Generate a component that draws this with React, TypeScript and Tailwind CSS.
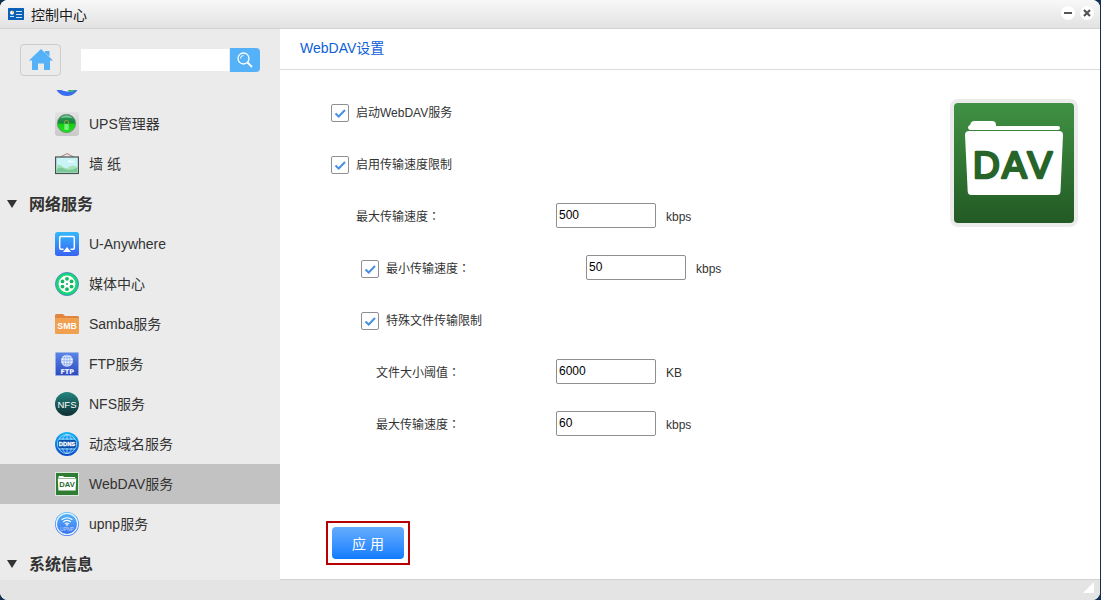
import React, { useState } from 'react';

type IconProps = { className?: string };

const ICON = 'block h-6 w-6 shrink-0';

function GlobeSliver() {
  return (
    <svg viewBox="0 0 24 24" className={ICON} aria-hidden="true">
      <circle cx="12" cy="12" r="12" fill="#3b6df0" />
      <path d="M4.500 17h10.500v2.200q-6 1-10.500-2.200z" fill="#f2f6ff" />
      <path d="M13 17h7.500l-2 2.500q-3 1.500-5.500-.8z" fill="#3fb26b" />
    </svg>
  );
}

function UpsIcon() {
  return (
    <svg viewBox="0 0 24 24" className={ICON} aria-hidden="true">
      <defs>
        <linearGradient id="upsPlate" x1="0" y1="0" x2="0" y2="1">
          <stop offset="0" stopColor="#e2e2e2" />
          <stop offset="1" stopColor="#c9c9c9" />
        </linearGradient>
        <linearGradient id="upsBall" x1="0" y1="0" x2="0" y2="1">
          <stop offset="0" stopColor="#2f9b5c" />
          <stop offset="0.48" stopColor="#16853a" />
          <stop offset="0.52" stopColor="#12cf12" />
          <stop offset="1" stopColor="#1fe01f" />
        </linearGradient>
      </defs>
      <rect width="24" height="24" rx="3" fill="url(#upsPlate)" />
      <circle cx="11.500" cy="11.500" r="9.200" fill="url(#upsBall)" stroke="#6b8f77" strokeWidth="0.8" />
      <path d="M5 6.500Q11.500 0 18 6.500Q11.500 4.500 5 6.500z" fill="#8fd0ac" opacity="0.8" />
      <path d="M9.500 12v-2q0-1.500 2-1.500t2 1.500V12" fill="none" stroke="#8c9a3c" strokeWidth="1.100" />
      <rect x="9.300" y="12" width="4.400" height="6" rx="0.800" fill="#7aee7a" />
    </svg>
  );
}

function WallpaperIcon() {
  return (
    <svg viewBox="0 0 24 24" className={ICON} aria-hidden="true">
      <path d="M5.500 5 12 1.500 18.500 5" fill="none" stroke="#b08a8a" strokeWidth="1.100" />
      <rect x="0.600" y="5" width="22.800" height="16.500" fill="#c9f4f6" stroke="#4a4f52" strokeWidth="1.200" />
      <path d="M1.500 14q3-3 6.500 1 3 2 6 0 4-3 8.500 0v5.500h-21z" fill="#a5e3bb" />
      <path d="M1.500 17.500q4-4 9 0 6 1.500 12-2v5h-21z" fill="#7cc795" />
      <path d="M13 9q2-2 3 0h3v1.200h-6z" fill="#f3ffff" />
    </svg>
  );
}

function AnywhereIcon() {
  return (
    <svg viewBox="0 0 24 24" className={ICON} aria-hidden="true">
      <defs>
        <linearGradient id="anywhere" x1="0" y1="0" x2="0" y2="1">
          <stop offset="0" stopColor="#35b8fb" />
          <stop offset="1" stopColor="#3763f2" />
        </linearGradient>
      </defs>
      <rect width="24" height="24" rx="2.500" fill="url(#anywhere)" />
      <path d="M8 17.200H6q-1.300 0-1.300-1.300V5.700q0-1.300 1.300-1.300h12q1.300 0 1.300 1.300v10.200q0 1.300-1.300 1.300h-2" fill="none" stroke="#fff" strokeWidth="1.500" strokeLinecap="round" />
      <path d="M12 15 16 20H8z" fill="#fff" />
    </svg>
  );
}

function MediaIcon() {
  return (
    <svg viewBox="0 0 24 24" className={ICON} aria-hidden="true">
      <circle cx="12" cy="12" r="11.500" fill="#18d873" stroke="#4b83c9" strokeWidth="0.900" />
      <circle cx="12" cy="12" r="8.400" fill="#fff" />
      <g fill="#17b665">
        <circle cx="12" cy="6.800" r="1.900" />
        <circle cx="16.500" cy="9.400" r="1.900" />
        <circle cx="16.500" cy="14.600" r="1.900" />
        <circle cx="12" cy="17.200" r="1.900" />
        <circle cx="7.500" cy="14.600" r="1.900" />
        <circle cx="7.500" cy="9.400" r="1.900" />
        <circle cx="12" cy="12" r="1" />
      </g>
    </svg>
  );
}

function SambaIcon() {
  return (
    <svg viewBox="0 0 24 24" className={ICON} aria-hidden="true">
      <path d="M0 3.500Q0 2 1.500 2H8l2 2h12.500Q24 4 24 5.500V9H0z" fill="#e0843f" />
      <rect y="6" width="24" height="16" rx="1" fill="#f0a04f" />
      <text x="12" y="16.800" textAnchor="middle" fontFamily="Liberation Sans, sans-serif" fontWeight="700" fontSize="8.700" fill="#fff">SMB</text>
    </svg>
  );
}

function FtpIcon() {
  return (
    <svg viewBox="0 0 24 24" className={ICON} aria-hidden="true">
      <defs>
        <linearGradient id="ftp" x1="0" y1="0" x2="0" y2="1">
          <stop offset="0" stopColor="#5a86e6" />
          <stop offset="1" stopColor="#2e4cc0" />
        </linearGradient>
      </defs>
      <rect x="0.500" y="0.500" width="23" height="23" rx="0.500" fill="url(#ftp)" stroke="#9db1e6" strokeWidth="0.600" />
      <circle cx="12" cy="8.800" r="6" fill="#eff5ff" />
      <g fill="none" stroke="#7c9fe8" strokeWidth="0.700">
        <path d="M12 2.800v12M6 8.800h12M7 5.800h10M7 11.800h10" />
        <ellipse cx="12" cy="8.800" rx="3" ry="6" />
      </g>
      <text x="12.200" y="22" textAnchor="middle" fontFamily="DejaVu Sans, sans-serif" fontWeight="700" fontSize="6.500" fill="#fff">FTP</text>
    </svg>
  );
}

function NfsIcon() {
  return (
    <svg viewBox="0 0 24 24" className={ICON} aria-hidden="true">
      <defs>
        <linearGradient id="nfs" x1="0" y1="0" x2="0" y2="1">
          <stop offset="0" stopColor="#22857f" />
          <stop offset="1" stopColor="#0f2f33" />
        </linearGradient>
      </defs>
      <circle cx="12" cy="12" r="12" fill="url(#nfs)" />
      <text x="12" y="15.500" textAnchor="middle" fontFamily="Liberation Sans, sans-serif" fontSize="9.500" fill="#fff">NFS</text>
    </svg>
  );
}

function DdnsIcon() {
  return (
    <svg viewBox="0 0 24 24" className={ICON} aria-hidden="true">
      <defs>
        <linearGradient id="ddns" x1="0" y1="0" x2="0" y2="1">
          <stop offset="0" stopColor="#16b4f6" />
          <stop offset="1" stopColor="#0c49c9" />
        </linearGradient>
      </defs>
      <circle cx="12" cy="12" r="12" fill="url(#ddns)" />
      <g fill="none" stroke="#a9e2ff" strokeWidth="0.800">
        <circle cx="12" cy="12" r="9.500" />
        <ellipse cx="12" cy="12" rx="5" ry="9.500" />
        <path d="M12 2.500v19M4 7h16M4 17h16" />
      </g>
      <rect x="3" y="8" width="18" height="8" rx="2" fill="#0a50a8" />
      <text x="12" y="14.200" textAnchor="middle" fontFamily="Liberation Sans, sans-serif" fontWeight="700" fontSize="5.800" fill="#fff" stroke="#fff" strokeWidth="0.300">DDNS</text>
    </svg>
  );
}

function DavSmallIcon() {
  return (
    <svg viewBox="0 0 24 24" className={ICON} aria-hidden="true">
      <rect width="24" height="24" rx="0.500" fill="#dfe8df" />
      <rect x="1" y="1" width="22" height="22" fill="#2f7d32" />
      <path d="M3.500 6V5Q3.500 4 4.500 4H8l1 1h11v1z" fill="#fff" />
      <path d="M2.800 6.500h18.400l-.6 12H3.400z" fill="#fff" />
      <text x="12" y="15.300" textAnchor="middle" fontFamily="Liberation Sans, sans-serif" fontWeight="700" fontSize="7.600" fill="#2a6a2c">DAV</text>
    </svg>
  );
}

function UpnpIcon() {
  return (
    <svg viewBox="0 0 24 24" className={ICON} aria-hidden="true">
      <defs>
        <linearGradient id="upnp" x1="0" y1="0" x2="0" y2="1">
          <stop offset="0" stopColor="#55b9f9" />
          <stop offset="1" stopColor="#3a6df2" />
        </linearGradient>
      </defs>
      <circle cx="12" cy="12" r="12" fill="url(#upnp)" />
      <circle cx="12" cy="12" r="10.600" fill="none" stroke="#eaf5ff" strokeWidth="1.200" />
      <g fill="none" stroke="#fff" strokeLinecap="round" strokeWidth="1.100">
        <path d="M7 7.500q5-3.600 10 0" />
        <path d="M8.500 9.700q3.500-2.600 7 0" />
        <path d="M10.200 11.600q1.800-1.300 3.600 0" />
      </g>
      <circle cx="12" cy="13" r="0.900" fill="#fff" />
      <text x="12" y="18.700" textAnchor="middle" fontFamily="Liberation Sans, sans-serif" fontSize="5" fill="#c5dcff">UPNP</text>
    </svg>
  );
}

function DavLogo({ className }: IconProps) {
  return (
    <svg viewBox="0 0 128 128" className={className} role="img" aria-label="WebDAV">
      <defs>
        <linearGradient id="davLogo" x1="0" y1="0" x2="0" y2="1">
          <stop offset="0" stopColor="#409143" />
          <stop offset="1" stopColor="#225a24" />
        </linearGradient>
      </defs>
      <rect width="128" height="128" rx="8" fill="#ebebeb" />
      <rect x="4" y="4" width="120" height="120" rx="4" fill="url(#davLogo)" />
      <path d="M20 31q-2-.5-2-2.500t2-2.500l1-2.500Q22 22 24 22h18q4 0 4 4v1h62q2 0 2 2t-2 2z" fill="#fff" />
      <path d="M19 32h90q4 0 4 4l-2.500 56.500q-.2 3.500-4 3.500h-85q-3.600 0-3.800-3.500L15 36q0-4 4-4z" fill="#fff" />
      <text x="23 52 77.500" y="79" fontFamily="Liberation Sans, sans-serif" fontSize="37" fill="#27642a" stroke="#27642a" strokeWidth="2.600" strokeLinejoin="round">DAV</text>
    </svg>
  );
}

function Group({ title, children }: { title: string; children?: React.ReactNode }) {
  return (
    <li>
      <h2>
        <button type="button" className="flex h-10 w-full items-center gap-3 pl-[7px] text-left text-base font-bold text-[#333]">
          <svg viewBox="0 0 10 8" className="h-2 w-[10px]" aria-hidden="true">
            <path d="M0 0h10L5 8z" fill="#333" />
          </svg>
          <span className="pt-[2px]">{title}</span>
        </button>
      </h2>
      {children && <ul>{children}</ul>}
    </li>
  );
}

function Item({ icon, label, active }: { icon: React.ReactNode; label?: string; active?: boolean }) {
  return (
    <li>
      <a
        href="#"
        aria-current={active ? 'page' : undefined}
        className={
          active
            ? 'flex h-10 items-center gap-[10px] bg-[#c2c2c2] pl-[55px] text-sm text-[#333]'
            : 'flex h-10 items-center gap-[10px] pl-[55px] text-sm text-[#333]'
        }
      >
        {icon}
        {label}
      </a>
    </li>
  );
}

function Colon() {
  return <span className="font-['Noto_Sans_CJK_TC',sans-serif] leading-none" lang="zh-TW">：</span>;
}

function Check({ id, label, colon }: { id: string; label: string; colon?: boolean }) {
  const [on, setOn] = useState(true);
  return (
    <div className="flex items-center gap-[7px]">
      <span className="grid h-[18px] w-[18px] shrink-0">
        <input
          id={id}
          type="checkbox"
          checked={on}
          onChange={(e) => setOn(e.target.checked)}
          className="col-start-1 row-start-1 h-[18px] w-[18px] appearance-none rounded-xs border border-[#8f8f8f] bg-white"
        />
        {on && (
          <svg viewBox="0 0 18 18" className="pointer-events-none col-start-1 row-start-1 h-[18px] w-[18px]" aria-hidden="true">
            <path d="M4.500 9.500 7.700 12.500 14 6" fill="none" stroke="#4a90e2" strokeWidth="2" />
          </svg>
        )}
      </span>
      <label htmlFor={id}>{label}{colon && <Colon />}</label>
    </div>
  );
}

function Field({ id, value, unit, label }: { id: string; value: string; unit: string; label?: string }) {
  return (
    <div className="flex items-center gap-[10px] pb-1">
      <input
        id={id}
        aria-label={label}
        defaultValue={value}
        className="h-[25px] w-[100px] rounded-xs border border-[#8f8f8f] bg-white px-[2px] text-xs text-black"
      />
      <span className="pt-1">{unit}</span>
    </div>
  );
}

const ROW = 'flex h-[52px] items-center';

export default function App() {
  return (
    <div className="h-screen bg-[#12304f] pr-px font-['Liberation_Sans','Noto_Sans_CJK_SC',sans-serif]">
      <div className="flex h-full flex-col overflow-hidden rounded-lg bg-white">
        <header className="flex h-[29px] shrink-0 items-center gap-[7px] border-b border-[#d2d2d2] bg-linear-to-b from-[#f8f8f8] to-[#e2e2e2] pr-[6px] pl-2">
          <svg viewBox="0 0 16 12" className="h-3 w-4" aria-hidden="true">
            <rect width="16" height="12" rx="0.500" fill="#0962b8" />
            <circle cx="4" cy="4.800" r="2" fill="#fff" />
            <path d="M4 2.800a2 2 0 0 1 2 2H4z" fill="#f5c242" />
            <path d="M8 3.500h6M8 6.500h6M8 9.500h6M2 8.500h4" stroke="#cfe3f7" strokeWidth="1" />
          </svg>
          <h1 className="flex-1 pt-[2px] text-sm text-[#1a1a1a]">控制中心</h1>
          <div className="flex gap-[5px] pb-[2px]">
            <button type="button" aria-label="最小化" className="grid h-[14px] w-[14px] place-items-center rounded-full bg-white">
              <svg viewBox="0 0 14 14" className="h-[14px] w-[14px]"><path d="M3 7h8" stroke="#555" strokeWidth="2" /></svg>
            </button>
            <button type="button" aria-label="关闭" className="grid h-[14px] w-[14px] place-items-center rounded-full bg-white">
              <svg viewBox="0 0 14 14" className="h-[14px] w-[14px]"><path d="m4 4 6 6M10 4l-6 6" stroke="#555" strokeWidth="2.200" /></svg>
            </button>
          </div>
        </header>

        <div className="flex min-h-0 flex-1">
          <aside className="flex w-[280px] shrink-0 flex-col bg-[#ebebeb]">
            <div className="flex h-[61px] shrink-0 items-center px-5">
              <button type="button" aria-label="主页" className="mr-5 grid h-8 w-[41px] shrink-0 place-items-center rounded border border-[#cccccc]">
                <svg viewBox="0 0 24 22" className="h-[22px] w-6" aria-hidden="true">
                  <path d="M12 0 24 11.500h-3V21h-6v-6.500H9V21H3v-9.500H0zM16 2h4.500v5.500L16 3.500z" fill="#55b1f8" />
                </svg>
              </button>
              <form className="flex min-w-0 flex-1 items-center" onSubmit={(e) => e.preventDefault()}>
                <input type="search" aria-label="搜索" className="mr-px h-[22px] min-w-0 flex-1 bg-white px-1 text-xs" />
                <button type="submit" aria-label="搜索" className="grid h-6 w-[30px] shrink-0 place-items-center rounded-r bg-[#55b1f8]">
                  <svg viewBox="0 0 16 16" className="h-4 w-4" aria-hidden="true">
                    <circle cx="6.500" cy="6.500" r="5.500" fill="none" stroke="#fff" strokeWidth="1.300" />
                    <path d="M3.500 6.500a3 3 0 0 1 3-3" fill="none" stroke="#fff" strokeWidth="1" />
                    <path d="m10.500 10.500 4.500 4.500" stroke="#fff" strokeWidth="1.800" />
                  </svg>
                </button>
              </form>
            </div>
            <nav className="min-h-0 flex-1 overflow-hidden">
              <ul className="-mt-[26px]">
                <Item icon={<GlobeSliver />} />
                <Item icon={<UpsIcon />} label="UPS管理器" />
                <Item icon={<WallpaperIcon />} label="墙 纸" />
                <Group title="网络服务">
                  <Item icon={<AnywhereIcon />} label="U-Anywhere" />
                  <Item icon={<MediaIcon />} label="媒体中心" />
                  <Item icon={<SambaIcon />} label="Samba服务" />
                  <Item icon={<FtpIcon />} label="FTP服务" />
                  <Item icon={<NfsIcon />} label="NFS服务" />
                  <Item icon={<DdnsIcon />} label="动态域名服务" />
                  <Item icon={<DavSmallIcon />} label="WebDAV服务" active />
                  <Item icon={<UpnpIcon />} label="upnp服务" />
                </Group>
                <Group title="系统信息" />
              </ul>
            </nav>
          </aside>

          <main className="flex min-w-0 flex-1 flex-col border-b border-[#d2d2d2]">
            <h2 className="flex h-[41px] shrink-0 items-center border-b border-[#dcdcdc] px-5 pb-[2px] text-sm text-[#0d5fd8]">WebDAV设置</h2>
            <div className="flex min-h-0 flex-1 items-start justify-between pr-[22px]">
              <form className="flex h-full flex-col justify-between pt-[17px] pb-[14px] pl-[46px] text-xs text-[#333]" onSubmit={(e) => e.preventDefault()}>
                <div className="pl-[5px]">
                  <div className={ROW}><Check id="enable" label="启动WebDAV服务" /></div>
                  <div className={ROW}><Check id="limit" label="启用传输速度限制" /></div>
                  <div className={ROW}>
                    <label htmlFor="max" className="w-[225px] pl-[25px]">最大传输速度<Colon /></label>
                    <Field id="max" value="500" unit="kbps" />
                  </div>
                  <div className={ROW}>
                    <div className="w-[255px] pl-[30px]"><Check id="minOn" label="最小传输速度" colon /></div>
                    <Field id="min" value="50" unit="kbps" label="最小传输速度" />
                  </div>
                  <div className={ROW}><div className="pl-[30px]"><Check id="special" label="特殊文件传输限制" /></div></div>
                  <div className={ROW}>
                    <label htmlFor="size" className="w-[225px] pl-[45px]">文件大小阈值<Colon /></label>
                    <Field id="size" value="6000" unit="KB" />
                  </div>
                  <div className={ROW}>
                    <label htmlFor="bigMax" className="w-[225px] pl-[45px]">最大传输速度<Colon /></label>
                    <Field id="bigMax" value="60" unit="kbps" />
                  </div>
                </div>
                <div className="self-start border-2 border-[#b90000] p-1">
                  <button type="submit" className="block h-8 w-[72px] rounded bg-linear-to-b from-[#64adfd] to-[#0a7bff] pt-[2px] text-sm text-white">应 用</button>
                </div>
              </form>
              <DavLogo className="mt-[29px] h-32 w-32 shrink-0" />
            </div>
          </main>
        </div>

        <footer className="flex h-5 shrink-0 items-start justify-end bg-[#e4e4e4] pt-[2px] pr-[6px]">
          <svg viewBox="0 0 11 11" className="h-[11px] w-[11px]" aria-hidden="true"><path d="M11 0v11H0z" fill="#fff" /></svg>
        </footer>
      </div>
    </div>
  );
}
